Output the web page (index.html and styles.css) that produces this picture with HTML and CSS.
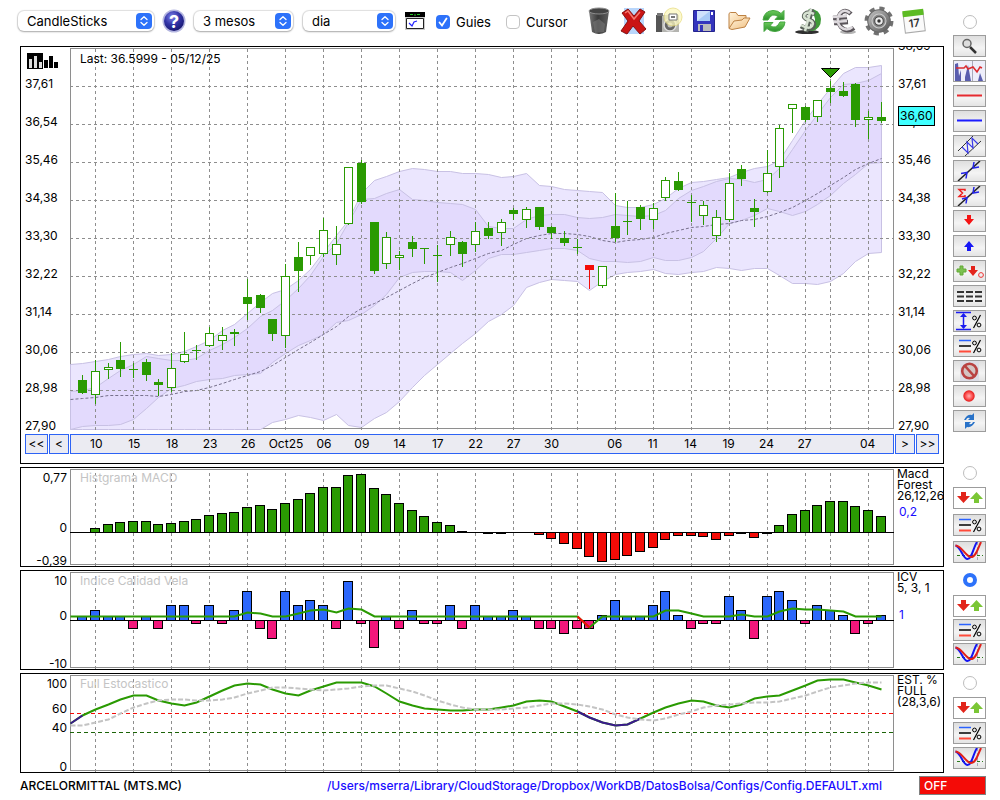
FILE: index.html
```html
<!DOCTYPE html>
<html lang="ca">
<head>
    <meta charset="UTF-8">
    <meta name="viewport" content="width=device-width, initial-scale=1.0">
    <title>ARCELORMITTAL (MTS.MC)</title>
    <link rel="stylesheet" href="styles.css">
</head>
<body>
    <!-- Shared icons -->
    <svg class="defs" aria-hidden="true">
        <defs>
            <radialGradient id="gHelp" cx="40%" cy="30%" r="75%"><stop offset="0" stop-color="#7f83e8"/><stop offset="0.5" stop-color="#3335a8"/><stop offset="1" stop-color="#15156c"/></radialGradient>
            <linearGradient id="gDark" x1="0" x2="1"><stop offset="0" stop-color="#777"/><stop offset="0.45" stop-color="#3a3a3a"/><stop offset="1" stop-color="#606060"/></linearGradient>
            <linearGradient id="gGreen" x1="0" x2="0" y1="0" y2="1"><stop offset="0" stop-color="#6dcc5c"/><stop offset="1" stop-color="#2b8f2b"/></linearGradient>
            <linearGradient id="gMetal" x1="0" x2="1" y1="0" y2="1"><stop offset="0" stop-color="#c4c4c4"/><stop offset="1" stop-color="#555"/></linearGradient>
            <linearGradient id="gFolder" x1="0" x2="1" y1="0" y2="1"><stop offset="0" stop-color="#fff3dc"/><stop offset="1" stop-color="#f0bf80"/></linearGradient>
            <radialGradient id="gDot"><stop offset="0" stop-color="#ffb0b0"/><stop offset="0.5" stop-color="#ff6262"/><stop offset="1" stop-color="#e31818"/></radialGradient>
        </defs>
        <symbol id="updown" viewBox="0 0 16 16">
            <rect width="16" height="16" rx="4" fill="#2d72fa"/>
            <path d="M5 6.500L8 3.700l3 2.800M5 9.500l3 2.800 3-2.800" fill="none" stroke="#fff" stroke-width="1.300" stroke-linecap="round" stroke-linejoin="round"/>
        </symbol>
        <symbol id="arrows" viewBox="0 0 31 20">
            <path d="M7 4h5v4h4l-6.500 7L3 8h4z" fill="#e2251b"/>
            <path d="M20 15h5v-4h4l-6.500-7L16 11h4z" fill="#7ac635"/>
        </symbol>
        <symbol id="levels" viewBox="0 0 31 20">
            <path d="M5 4.500h12" stroke="#2a62ff" stroke-width="1.500"/>
            <path d="M5 10h12" stroke="#000" stroke-width="1.500"/>
            <path d="M5 15.500h12" stroke="#ff4b3a" stroke-width="2"/>
            <path d="M26.500 4l-7 13" stroke="#000" stroke-width="1.200"/>
            <circle cx="20.500" cy="7" r="1.900" fill="none" stroke="#000"/>
            <circle cx="25" cy="14" r="1.900" fill="none" stroke="#000"/>
        </symbol>
        <symbol id="cross" viewBox="0 0 31 20">
            <path d="M3 13.500h26" stroke="#2b7a1d" stroke-dasharray="3 2"/>
            <path d="M23.500 0v20" stroke="#aab" stroke-dasharray="3 2"/>
            <path d="M1.500 3.500C7 5 9 17 13.500 17S19 6 23 0" fill="none" stroke="#1414f2" stroke-width="2"/>
            <path d="M1.500 3.500C8 4 12 15 17 15S24 6 27 0" fill="none" stroke="#e22019" stroke-width="2"/>
        </symbol>
    </svg>

    <div class="layout">
        <main class="main">
            <div class="toolbar">
                <span class="select chart-type">
                    <select aria-label="Tipus de gràfic"><option>CandleSticks</option></select>
                    <svg><use href="#updown"/></svg>
                </span>
                <button class="icon-btn help" aria-label="Ajuda">
                    <svg width="24" height="24" viewBox="0 0 24 24"><circle cx="12" cy="12" r="11.500" fill="#b3b5e0"/><circle cx="12" cy="12" r="10" fill="url(#gHelp)"/><text x="12" y="18.500" font-size="18" font-weight="700" text-anchor="middle" fill="#fff">?</text></svg>
                </button>
                <span class="select period">
                    <select aria-label="Període"><option>3 mesos</option></select>
                    <svg><use href="#updown"/></svg>
                </span>
                <span class="select interval">
                    <select aria-label="Interval"><option>dia</option></select>
                    <svg><use href="#updown"/></svg>
                </span>
                <button class="icon-btn plot-btn" aria-label="Plot">
                    <svg width="20" height="20" viewBox="0 0 20 20"><path d="M0 1h20v18H0z" fill="#ccc"/><path d="M0 1h20v5H0z" fill="#000"/><path d="M5 3.500h3M9 4h2M12 3.500h3" stroke="#27c424"/><path d="M1.500 7.500h17v10h-17z" fill="#fff" stroke="#222"/><path d="M4 12l3 3 2-4 3-1" fill="none" stroke="#22f" stroke-width="1.200"/></svg>
                </button>
                <label class="check guides"><input type="checkbox" checked>Guies</label>
                <label class="check cursor"><input type="checkbox">Cursor</label>

                <div class="actions">
                    <button class="icon-btn" aria-label="Paperera">
                        <svg width="22" height="28" viewBox="0 0 22 28"><path d="M1 4l3 21q7 4 14 0l3-21z" fill="url(#gDark)"/><path d="M5 15l6-3 6 5-1 8-9 1z" fill="#787878" opacity="0.6"/><ellipse cx="11" cy="4" rx="10" ry="3" fill="#444" stroke="#8d8d8d"/></svg>
                    </button>
                    <button class="icon-btn" aria-label="Esborrar">
                        <svg width="28" height="28" viewBox="0 0 28 28"><path d="M4 1h20v26H4z" fill="#b9d6fb"/><path d="M2 6l6-4 6 7 6-7 5 3-6 9 7 8-6 5-7-8-6 8-6-3 7-10z" fill="#ca1414" stroke="#861010"/><path d="M5 6l3-2 6 8 6-7" fill="none" stroke="#f37b72" stroke-width="1.500"/></svg>
                    </button>
                    <button class="icon-btn" aria-label="Captura">
                        <svg width="28" height="28" viewBox="0 0 28 28"><path d="M1 8h23v17H1z" fill="#b4b4b0"/><path d="M1 8h6v17H1z" fill="#555"/><path d="M2 6h6v3H2z" fill="#777"/><circle cx="15" cy="18" r="6" fill="#666" stroke="#ddd" stroke-width="1.500"/><circle cx="15" cy="18" r="2.500" fill="#bbb"/><circle cx="18" cy="10" r="9" fill="#fbf7be" opacity="0.75" stroke="#e8dc79"/><path d="M14 7h8v6h-8z" fill="#fff" stroke="#777"/><path d="M16 9h4v2h-4z" fill="#777"/></svg>
                    </button>
                    <button class="icon-btn" aria-label="Desar">
                        <svg width="22" height="22" viewBox="0 0 22 22"><path d="M.5.500h21v21h-21z" fill="#3434bd" stroke="#24248c"/><path d="M4 1h13v10H4z" fill="#cfe2fb"/><path d="M4 11L17 1v10z" fill="#a9cbf6"/><path d="M5 14h13v7H5z" fill="#bbb"/><path d="M7 15h3v6H7z" fill="#3434bd"/><path d="M18 2h2v3h-2z" fill="#fff"/></svg>
                    </button>
                    <button class="icon-btn" aria-label="Obrir">
                        <svg width="24" height="20" viewBox="0 0 24 20"><path d="M2 17V2.500Q3 1 5 1.500h4l2 3h8V8" fill="url(#gFolder)" stroke="#bd8244"/><path d="M2 17.500L7 10l8-1 2-2h6l-5 9-13 2.500z" fill="url(#gFolder)" stroke="#bd8244" stroke-linejoin="round"/></svg>
                    </button>
                    <button class="icon-btn" aria-label="Actualitzar">
                        <svg width="24" height="26" viewBox="0 0 24 26"><path d="M1 12Q2 3 11 2.500q5 0 8 3l3-3v9h-9l3-3Q10 4 6 12z" fill="url(#gGreen)" stroke="#47a842"/><path d="M23 14q-1 9-10 9.500-5 0-8-3l-3 3v-9h9l-3 3q6 4.500 10-3.500z" fill="url(#gGreen)" stroke="#47a842"/></svg>
                    </button>
                    <button class="icon-btn" aria-label="Dòlar">
                        <svg width="28" height="28" viewBox="0 0 28 28"><ellipse cx="12" cy="25" rx="12" ry="2" fill="#2f2f2f"/><path d="M13 2q12-1 13 10 0 10-9 12l-5-1q9-4 8-11-1-6-7-10z" fill="#3f9a38"/><path d="M6 19q8 5 12 1 3-5-4-7-7-2-4-6 3-3 10 0M17 2L11 25" fill="none" stroke="#59625a" stroke-width="4.500"/><path d="M6 18q8 5 11 1 3-4-3-6-7-2-4-6 3-3 9 0M16 2l-6 22" fill="none" stroke="#d7e2d2" stroke-width="2.600"/></svg>
                    </button>
                    <button class="icon-btn" aria-label="Euro">
                        <svg width="28" height="28" viewBox="0 0 28 28"><ellipse cx="18" cy="25" rx="8" ry="2" fill="#b5b5b5"/><path d="M21 7Q15 1 10 7 6 14 11 20q6 6 13 1M3 11l14-1M4 16l14-1" fill="none" stroke="#595459" stroke-width="4.500"/><path d="M20 6q-6-5-10.500 1-4 7 1 13 6 5 12 0M3 10l14-1M4 15l13-1" fill="none" stroke="#dedade" stroke-width="2.600"/></svg>
                    </button>
                    <button class="icon-btn" aria-label="Configuració">
                        <svg width="30" height="30" viewBox="0 0 28 28"><circle cx="14" cy="14" r="11.500" fill="none" stroke="#717171" stroke-width="4" stroke-dasharray="4.600 4.430"/><circle cx="14" cy="14" r="10.500" fill="url(#gMetal)" stroke="#666"/><circle cx="14" cy="14" r="6.500" fill="#888" stroke="#ccc"/><circle cx="14" cy="14" r="4" fill="#eee" stroke="#444"/><circle cx="14" cy="14" r="1.600" fill="#333"/></svg>
                    </button>
                    <button class="icon-btn" aria-label="Calendari">
                        <svg width="26" height="26" viewBox="0 0 26 26"><g transform="rotate(-7 13 13)"><path d="M3 4h20v20H3z" fill="#fafafa" stroke="#aaa"/><path d="M2.500 2h21v6h-21z" fill="#5cbb23"/><text x="13" y="19" font-size="11" font-weight="600" text-anchor="middle" fill="#333">17</text></g></svg>
                    </button>
                </div>
            </div>

            <div class="panels">
                <!-- Price chart -->
                <section class="panel price">
                    <div class="row">
                        <div class="prices left">
                            <svg class="bars-icon" width="32" height="16" viewBox="0 0 32 16" shape-rendering="crispEdges"><path d="M0 0h16v16H0z"/><path d="M2 6h3v9H2zM7 3h3v12H7zM12 9h3v6h-3z" fill="#ddd"/><path d="M17 7h4v8h-4zM22 3h4v12h-4zM27 9h4v6h-4z"/></svg>
                            <span>37,61</span><span>36,54</span><span>35,46</span><span>34,38</span><span>33,30</span><span>32,22</span><span>31,14</span><span>30,06</span><span>28,98</span><span>27,90</span>
                        </div>
                        <div class="plot">
                            <svg id="pricePlot" viewBox="70 47 824 387" preserveAspectRatio="none"></svg>
                            <div class="last">Last: 36.5999 - 05/12/25</div>
                        </div>
                        <div class="prices right">
                            <span>38,69</span><span>37,61</span><span>36,54</span><span>35,46</span><span>34,38</span><span>33,30</span><span>32,22</span><span>31,14</span><span>30,06</span><span>28,98</span><span>27,90</span>
                            <div class="current">36,60</div>
                        </div>
                    </div>
                    <div class="dates">
                        <button class="wide">&lt;&lt;</button>
                        <button>&lt;</button>
                        <div class="days" id="days"></div>
                        <button>&gt;</button>
                        <button class="wide">&gt;&gt;</button>
                    </div>
                </section>

                <!-- MACD -->
                <section class="panel row">
                    <div class="scale scale-macd"><span>0,77</span><span>0</span><span>-0,39</span></div>
                    <div class="plot">
                        <svg id="macdPlot" viewBox="70 468 824 98" preserveAspectRatio="none"></svg>
                        <div class="title">Histgrama MACD</div>
                    </div>
                    <div class="info"><p>Macd<br>Forest<br>26,12,26</p><b>0,2</b></div>
                </section>

                <!-- ICV -->
                <section class="panel row">
                    <div class="scale scale-icv"><span>10</span><span>0</span><span>-10</span></div>
                    <div class="plot">
                        <svg id="icvPlot" viewBox="70 571 824 98" preserveAspectRatio="none"></svg>
                        <div class="title">Indice Calidad Vela</div>
                    </div>
                    <div class="info"><p>ICV<br>5, 3, 1</p><b>1</b></div>
                </section>

                <!-- Stochastic -->
                <section class="panel row">
                    <div class="scale scale-stoch"><span>100</span><span>60</span><span>40</span><span>0</span></div>
                    <div class="plot">
                        <svg id="stochPlot" viewBox="70 674 824 98" preserveAspectRatio="none"></svg>
                        <div class="title">Full Estocastico</div>
                    </div>
                    <div class="info"><p>EST. %<br>FULL<br>(28,3,6)</p></div>
                </section>
            </div>
        </main>

        <aside class="side">
            <div class="group draw">
                <input type="radio" name="panel" aria-label="Preu">
                <button aria-label="Zoom"><svg viewBox="0 0 31 20"><path d="M16 11l6 6" stroke="#333" stroke-width="2.500"/><circle cx="13" cy="7.500" r="4" fill="#ddd" stroke="#666" stroke-width="1.500"/></svg></button>
                <button aria-label="Volum"><svg viewBox="0 0 31 20"><path d="M0 0h31v20H0z" fill="#eeeefa"/><path d="M1 20V3l3-1 1 13 2-6v11h4v-4l3-12 3 16h7l2-8 3 8z" fill="#5a5eae"/><path d="M18.500 0v20" stroke="#aab"/><path d="M2 7h8l2-2 2 3 5-2 4 5 3-5 2 1" fill="none" stroke="#dc2c30" stroke-width="1.500"/></svg></button>
                <button aria-label="Línia vermella"><svg viewBox="0 0 31 20"><path d="M3 9.500h25" stroke="#e62b30" stroke-width="2"/></svg></button>
                <button aria-label="Línia blava"><svg viewBox="0 0 31 20"><path d="M3 9.500h25" stroke="#1d1dff" stroke-width="2"/></svg></button>
                <button aria-label="Canal"><svg viewBox="0 0 31 20"><path d="M4 15L19 0M11 20L27 5" stroke="#333"/><path d="M8 11l6 6-1-11 6 6-1-10 6 6" fill="none" stroke="#3b3be8" stroke-width="1.200"/></svg></button>
                <button aria-label="Tendència"><svg viewBox="0 0 31 20"><path d="M4 20L26 0" stroke="#222" stroke-width="1.500"/><path d="M7 12.500l6-1-1 6M25 6l-6 1 1-6" fill="none" stroke="#2424e8" stroke-width="1.500"/></svg></button>
                <button aria-label="Suma"><svg viewBox="0 0 31 20"><path d="M4 20L26 0" stroke="#222" stroke-width="1.500"/><path d="M8 13l5-1.500-1 6M25 6l-6 1 1-6" fill="none" stroke="#2424e8" stroke-width="1.500"/><path d="M11 5V3.500H5L8.500 7 5 10.500h6V9" fill="none" stroke="#e22" stroke-width="1.500"/></svg></button>
                <button aria-label="Baixa"><svg viewBox="0 0 31 20"><path d="M13 4h4v4h3l-5 6-5-6h3z" fill="#f51414"/></svg></button>
                <button aria-label="Puja"><svg viewBox="0 0 31 20"><path d="M13 15h4v-4h3l-5-6-5 6h3z" fill="#1818f5"/></svg></button>
                <button aria-label="Senyals"><svg viewBox="0 0 31 20"><path d="M6 5h3v3h3v3H9v3H6v-3H3V8h3z" fill="#7cc150" stroke="#62a936"/><path d="M17 5h4v4h3l-5 6-5-6h3z" fill="#e3231b"/><circle cx="27" cy="14" r="2.400" fill="none" stroke="#e33"/></svg></button>
                <button aria-label="Línies"><svg viewBox="0 0 31 20"><path d="M3 6h25M3 10.500h25M3 15h25" stroke="#333" stroke-width="2" stroke-dasharray="7 2"/></svg></button>
                <button aria-label="Rang"><svg viewBox="0 0 31 20"><path d="M2 1.500h15M2 18.500h15" stroke="#1b1bf0" stroke-width="1.500"/><path d="M9.500 3v14" stroke="#1b1bf0" stroke-width="1.500"/><path d="M6 6l3.500-4L13 6zM6 14l3.500 4 3.500-4z" fill="#1b1bf0"/><path d="M26.500 4l-7 13" stroke="#000" stroke-width="1.200"/><circle cx="20.500" cy="7" r="1.900" fill="none" stroke="#000"/><circle cx="25" cy="14" r="1.900" fill="none" stroke="#000"/></svg></button>
                <button aria-label="Nivells"><svg><use href="#levels"/></svg></button>
                <button aria-label="Prohibit"><svg viewBox="0 0 31 20"><path d="M6 0h19v20H6z" fill="#dcdde6"/><circle cx="15.500" cy="10" r="7.300" fill="#d4c4c4" stroke="#b94242" stroke-width="2.600"/><path d="M11 5l9 10" stroke="#b94242" stroke-width="2.600"/></svg></button>
                <button aria-label="Gravar"><svg viewBox="0 0 31 20"><circle cx="15" cy="10" r="5.700" fill="url(#gDot)"/></svg></button>
                <button aria-label="Recarregar"><svg viewBox="0 0 31 20"><path d="M10 9q3-6 8-5l2-2v7h-6l2-2q-3-1-4 2zM21 11q-3 6-8 5l-2 2v-7h6l-2 2q3 1 4-2z" fill="#2872c8"/></svg></button>
            </div>
            <div class="group g-macd">
                <input type="radio" name="panel" aria-label="MACD">
                <button class="plain" aria-label="Fletxes"><svg><use href="#arrows"/></svg></button>
                <button aria-label="Nivells"><svg><use href="#levels"/></svg></button>
                <button aria-label="Creuaments"><svg><use href="#cross"/></svg></button>
            </div>
            <div class="group g-icv">
                <input type="radio" name="panel" aria-label="ICV" checked>
                <button class="plain" aria-label="Fletxes"><svg><use href="#arrows"/></svg></button>
                <button aria-label="Nivells"><svg><use href="#levels"/></svg></button>
                <button aria-label="Creuaments"><svg><use href="#cross"/></svg></button>
            </div>
            <div class="group g-stoch">
                <input type="radio" name="panel" aria-label="Estocàstic">
                <button class="plain" aria-label="Fletxes"><svg><use href="#arrows"/></svg></button>
                <button aria-label="Nivells"><svg><use href="#levels"/></svg></button>
                <button aria-label="Creuaments"><svg><use href="#cross"/></svg></button>
            </div>
        </aside>
    </div>

    <footer class="footer">
        <span>ARCELORMITTAL (MTS.MC)</span>
        <span class="path">/Users/mserra/Library/CloudStorage/Dropbox/WorkDB/DatosBolsa/Configs/Config.DEFAULT.xml</span>
        <button class="off">OFF</button>
    </footer>

    <script src="charts.js"></script>
</body>
</html>
```
FILE: styles.css
```css
:root {
    --green: #2a9a02;
    --blue: #2d63f5;
    --line: #8e8e8e;
}

* {
    box-sizing: border-box;
}

body {
    margin: 0;
    background: #fff;
    color: #000;
    font-family: Inter, "Liberation Sans", sans-serif;
    font-size: 12px;
    line-height: 14px;
}

button {
    padding: 0;
    border: 0;
    background: none;
    color: inherit;
    font: inherit;
}

svg {
    display: block;
}

.defs {
    position: absolute;
    width: 0;
    height: 0;
}

.layout {
    display: grid;
    grid-template-columns: minmax(0, 1fr) 33px;
    gap: 9px;
    padding: 0 14px 0 20px;
}

/* Toolbar */
.toolbar {
    display: flex;
    align-items: center;
    height: 46px;
    padding-bottom: 4px;
    margin-left: -2px;
    font-size: 13px;
}

.select {
    position: relative;
    margin-right: 10px;
}

.select select {
    appearance: none;
    width: 100%;
    height: 20px;
    padding: 0 24px 1px 9px;
    border: 0;
    border-radius: 6px;
    background: #fff;
    box-shadow: 0 0 1px 1px rgba(0, 0, 0, 0.12), 0 1px 2px rgba(0, 0, 0, 0.25);
    color: #000;
    font: inherit;
}

.select svg {
    position: absolute;
    top: 2px;
    right: 2px;
    width: 16px;
    height: 16px;
    pointer-events: none;
}

.chart-type {
    width: 136px;
    margin-right: 8px;
}

.period {
    width: 99px;
}

.interval {
    width: 92px;
}

.help {
    margin-right: 8px;
}

.plot-btn {
    margin-right: 11px;
}

.check {
    display: flex;
    align-items: center;
    gap: 6px;
    padding-top: 2px;
}

.guides {
    margin-right: 15px;
}

.check input {
    appearance: none;
    width: 14px;
    height: 14px;
    margin: 0;
    border: 1px solid #c4c4c4;
    border-radius: 4px;
}

.check input:checked {
    border: 0;
    background: #2d72fa url("data:image/svg+xml,%3Csvg xmlns='http://www.w3.org/2000/svg' viewBox='0 0 14 14'%3E%3Cpath d='M3.500 7.500l2.500 3 4.500-7' fill='none' stroke='white' stroke-width='1.800' stroke-linecap='round'/%3E%3C/svg%3E");
}

.actions {
    display: grid;
    grid-template-columns: repeat(10, 35px);
    align-items: center;
    justify-items: center;
    margin-left: auto;
    margin-right: 13px;
}

/* Panels */
.panels {
    display: grid;
    gap: 3px;
}

.panel {
    border: 1px solid #000;
    overflow: hidden;
}

.row {
    display: grid;
    grid-template-columns: 49px minmax(0, 1fr) 49px;
}

.plot {
    position: relative;
}

.plot svg {
    width: 100%;
    height: 98px;
}

.price .plot svg {
    height: 387px;
}

.last,
.title {
    position: absolute;
    top: 5px;
    left: 10px;
}

.title {
    top: 3px;
    color: #c4c4c4;
}

.prices {
    position: relative;
    display: flex;
    flex-direction: column;
    gap: 24px;
    height: 387px;
    padding-left: 4px;
}

.prices.right {
    margin-top: -8px;
}

.bars-icon {
    margin: 6px 0 -16px 2px;
    flex: none;
}

.current {
    position: absolute;
    top: 67px;
    left: 4px;
    padding: 2px 1px;
    border: 1px solid #000;
    background: #40ffff;
}

.dates {
    display: flex;
    gap: 1px;
    padding: 0 4px 9px;
}

.dates button,
.days {
    height: 20px;
    border: 1px solid var(--blue);
    background: #ebebf2;
}

.dates button {
    width: 20px;
}

.dates .wide {
    width: 23px;
}

.days {
    flex: 1;
    display: grid;
    grid-template-columns: repeat(65, minmax(0, 1fr));
    align-items: center;
}

.days span {
    grid-row: 1;
    justify-self: center;
    white-space: nowrap;
}

.scale {
    display: grid;
    height: 98px;
    padding: 3px 3px 0 0;
    text-align: right;
}

.scale-macd {
    grid-template-rows: 50px 33px 14px;
}

.scale-icv {
    grid-template-rows: 35px 48px 14px;
}

.scale-stoch {
    grid-template-rows: 25px 19px 39px 14px;
}

.info {
    padding-left: 3px;
    line-height: 11px;
}

.info p {
    min-height: 33px;
    margin: 0 0 5px;
}

.info b {
    padding-left: 2px;
    color: #1a0dff;
    font-weight: 400;
}

/* Side tools */
.side {
    padding-top: 15px;
}

.group {
    display: flex;
    flex-direction: column;
    gap: 3px;
}

.group button {
    height: 22px;
    border: 1px solid #9c9c9c;
    background: linear-gradient(#dedede, #f4f4f4 60%, #e4e4e4);
}

.group .plain {
    background: #fff;
}

.group button svg {
    width: 31px;
    height: 20px;
}

.group input {
    appearance: none;
    width: 14px;
    height: 14px;
    margin: 0 auto 4px;
    border: 1px solid #bdbdbd;
    border-radius: 50%;
}

.group input:checked {
    border: 4px solid #2d72fa;
}

.draw input {
    margin-bottom: 3px;
}

.g-macd {
    gap: 5px;
    margin-top: 34px;
}

.g-macd input {
    margin-bottom: 2px;
}

.g-icv {
    gap: 2px;
    margin-top: 10px;
}

.g-icv input {
    margin-bottom: 6px;
}

.g-stoch {
    margin-top: 11px;
}

.footer {
    display: flex;
    align-items: center;
    padding: 3px 14px 0 20px;
    font-weight: 500;
}

.path {
    margin-left: auto;
    margin-right: 37px;
    color: #1a0dff;
}

.off {
    width: 67px;
    height: 19px;
    padding-left: 4px;
    border: 1px solid #808080;
    background: #f40b07;
    color: #fff;
    text-align: left;
}

/* Chart marks */
.grid {
    fill: none;
    stroke: var(--line);
    stroke-dasharray: 3 3;
    shape-rendering: crispEdges;
}

.frame {
    fill: none;
    stroke: var(--line);
    shape-rendering: crispEdges;
}

.zero {
    stroke: #000;
    shape-rendering: crispEdges;
}

.outer {
    fill: #ebe6fe;
    stroke: #c8c1e4;
}

.inner {
    fill: #e3dafd;
    stroke: #c8c1e4;
}

.mean {
    fill: none;
    stroke: #77708c;
    stroke-dasharray: 3 2;
}

.candle {
    fill: var(--green);
    stroke: var(--green);
    shape-rendering: crispEdges;
}

.candle.hollow rect {
    fill: #fff;
}

.candle.down {
    fill: #f40b07;
    stroke: #f40b07;
}

.marker {
    fill: var(--green);
    stroke: #000;
}

.bar {
    stroke: #000;
    shape-rendering: crispEdges;
}

.macd-up {
    fill: var(--green);
}

.macd-down {
    fill: #f40b07;
}

.icv-up {
    fill: #2c67fb;
}

.icv-down {
    fill: #f3177b;
}

.curve {
    fill: none;
    stroke: var(--green);
    stroke-width: 2;
}

.curve.weak {
    stroke: #f40b07;
}

.curve.low {
    stroke: #3a1a8c;
}

.slow {
    fill: none;
    stroke: #c4c4c4;
    stroke-width: 2;
    stroke-dasharray: 5 2;
}

.limit {
    stroke-dasharray: 4 3;
    shape-rendering: crispEdges;
}

.limit.high {
    stroke: #f40b07;
}

.limit.bottom {
    stroke: #1c6408;
}
```
FILE: charts.js
```js
const LEFT = 70;
const STEP = 824 / 65;

// day index of every guide and its label
const guides = [
    [1, '10'], [4, '15'], [7, '18'], [10, '23'], [13, '26'], [16, 'Oct25'], [19, '06'], [22, '09'],
    [25, '14'], [28, '17'], [31, '22'], [34, '27'], [37, '30'], [39, ''], [42, '06'], [45, '11'],
    [48, '14'], [51, '19'], [54, '24'], [57, '27'], [59, ''], [62, '04']
];

// type, body top, body bottom, wick top, wick bottom
const candles = [
    ['f', 380, 393, 375, 394], ['h', 371, 395, 360, 404], ['h', 367, 370, 363, 379], ['f', 360, 369, 342, 377],
    ['d', 369, 370, 363, 378], ['f', 362, 375, 359, 381], ['f', 382, 385, 379, 396], ['h', 368, 388, 353, 392],
    ['h', 354, 362, 332, 363], ['d', 350, 351, 345, 360], ['h', 333, 346, 327, 347], ['h', 335, 341, 327, 350],
    ['f', 332, 334, 329, 346], ['f', 297, 304, 279, 320], ['f', 295, 308, 294, 313], ['f', 319, 334, 319, 341],
    ['h', 276, 336, 264, 348], ['f', 257, 271, 242, 292], ['h', 247, 256, 247, 265], ['h', 230, 254, 218, 257],
    ['h', 244, 255, 226, 265], ['h', 167, 224, 167, 225], ['f', 163, 202, 160, 204], ['f', 222, 271, 222, 274],
    ['h', 237, 264, 232, 269], ['h', 255, 258, 251, 270], ['f', 242, 249, 236, 257], ['d', 248, 249, 248, 264],
    ['d', 255, 256, 245, 282], ['h', 237, 245, 231, 256], ['f', 242, 254, 241, 267], ['h', 231, 245, 222, 252],
    ['f', 228, 236, 222, 239], ['h', 222, 233, 219, 246], ['f', 210, 214, 208, 220], ['h', 209, 220, 207, 228],
    ['f', 207, 227, 207, 230], ['f', 227, 233, 226, 239], ['f', 238, 243, 231, 246], ['d', 247, 248, 239, 254],
    ['r', 265, 270, 265, 289], ['h', 266, 286, 266, 288], ['f', 226, 238, 193, 242], ['d', 221, 222, 201, 235],
    ['f', 207, 219, 205, 230], ['h', 208, 220, 203, 229], ['h', 180, 198, 177, 201], ['f', 181, 190, 172, 191],
    ['d', 202, 203, 195, 222], ['h', 205, 216, 201, 225], ['h', 217, 236, 210, 242], ['h', 183, 220, 173, 222],
    ['f', 169, 179, 165, 186], ['f', 208, 212, 199, 227], ['h', 173, 192, 150, 193], ['h', 128, 167, 125, 178],
    ['h', 104, 109, 104, 133], ['f', 107, 120, 106, 122], ['h', 100, 117, 100, 122], ['f', 88, 92, 81, 103],
    ['f', 91, 96, 82, 97], ['f', 84, 120, 83, 127], ['h', 117, 120, 111, 139], ['f', 117, 121, 102, 123]
];

// bands start on the left edge, one day before the first candle
const outerTop = [364, 363, 361, 359, 356, 354, 353, 355, 354, 351, 346, 340, 330, 324, 313, 302, 293, 289, 280, 269, 252, 235, 220, 193, 180, 176, 171, 168, 169, 171, 171, 173, 173, 174, 177, 176, 173, 185, 186, 189, 190, 191, 192, 205, 207, 207, 204, 198, 188, 182, 181, 179, 177, 172, 168, 166, 160, 140, 120, 104, 88, 73, 67, 67, 65];
const innerTop = [391, 390, 387, 378, 370, 364, 356, 358, 360, 360, 358, 350, 344, 337, 328, 316, 310, 300, 288, 275, 256, 243, 222, 199, 198, 193, 189, 199, 200, 202, 203, 204, 209, 226, 228, 228, 219, 215, 214, 214, 217, 218, 217, 214, 215, 216, 215, 210, 198, 190, 186, 181, 178, 179, 182, 179, 168, 149, 130, 114, 97, 84, 83, 80, 73];
const innerBottom = [429, 426, 425, 425, 424, 419, 408, 397, 388, 385, 381, 379, 378, 375, 374, 373, 362, 353, 345, 340, 334, 322, 320, 314, 305, 294, 277, 272, 271, 271, 272, 280, 270, 258, 254, 254, 252, 250, 248, 248, 250, 258, 261, 261, 262, 261, 257, 260, 260, 257, 251, 238, 223, 220, 215, 208, 211, 215, 211, 204, 195, 183, 174, 163, 162];
const outerBottom = [429, 429, 429, 429, 429, 429, 429, 429, 429, 429, 429, 429, 429, 429, 429, 429, 422, 419, 415, 417, 420, 414, 425, 427, 418, 412, 401, 387, 375, 364, 353, 343, 333, 321, 314, 305, 287, 282, 279, 280, 281, 290, 281, 274, 272, 271, 269, 273, 274, 272, 271, 267, 268, 270, 268, 268, 275, 283, 283, 284, 281, 273, 261, 253, 252];
const mean = [399, 398, 397, 395, 395, 395, 395, 396, 394, 391, 390, 387, 383, 379, 375, 371, 365, 357, 349, 342, 334, 326, 316, 308, 303, 297, 290, 283, 277, 272, 267, 263, 258, 253, 250, 244, 238, 235, 233, 233, 234, 236, 240, 242, 240, 239, 237, 233, 230, 227, 226, 224, 223, 220, 219, 216, 212, 207, 200, 193, 185, 177, 169, 163, 158];

const macd = [0, 4, 8, 10, 11, 11, 8, 9, 11, 13, 17, 19, 20, 25, 27, 23, 29, 33, 39, 45, 45, 57, 58, 44, 38, 29, 22, 16, 10, 7, 1, 0, -1, -1, 0, 0, -2, -6, -11, -16, -24, -29, -27, -23, -19, -15, -7, -3, -3, -4, -7, -3, -1, -5, -1, 7, 18, 22, 27, 31, 31, 26, 22, 16];
const icv = [4, 10, 4, 4, -8, 4, -8, 15, 15, -3, 15, -3, 10, 29, -8, -18, 29, 15, 20, 15, -8, 39, -3, -27, 4, -8, 10, -3, -3, 15, -8, 15, 4, 4, 10, 4, -8, -8, -13, -8, -8, 5, 20, 4, 4, 15, 29, 5, -8, -3, -3, 24, 10, -18, 24, 29, 20, -3, 15, 10, 5, -13, -3, 5];
const icvLine = [616, 616, 616, 616, 616, 616, 616, 616, 616, 616, 616, 616, 616, 616, 612, 613, 616, 616, 613, 610, 609, 612, 608, 609, 616, 616, 616, 616, 616, 616, 616, 616, 616, 616, 616, 616, 616, 616, 616, 616, 616, 627, 616, 616, 616, 616, 616, 610, 610, 613, 616, 616, 616, 614, 616, 616, 611, 608, 609, 609, 610, 611, 616, 616, 616];
const fast = [723, 715, 709, 704, 699, 695, 695, 700, 703, 705, 702, 696, 690, 685, 683, 684, 689, 693, 695, 690, 686, 682, 682, 682, 686, 693, 701, 705, 708, 709, 710, 710, 709, 709, 707, 705, 701, 700, 701, 706, 711, 717, 722, 725, 724, 718, 712, 707, 703, 700, 701, 705, 707, 704, 698, 696, 695, 690, 685, 680, 679, 679, 682, 685, 689];
const slow = [725, 725, 722, 719, 713, 707, 703, 700, 699, 699, 700, 700, 699, 697, 693, 690, 687, 687, 688, 689, 690, 689, 688, 686, 685, 685, 688, 691, 695, 700, 704, 707, 709, 709, 709, 708, 707, 705, 703, 703, 704, 706, 709, 714, 717, 719, 720, 718, 714, 711, 707, 705, 704, 703, 702, 702, 701, 698, 695, 691, 687, 685, 683, 682, 682];

function dayX(i) {
    return Math.floor(LEFT + (i + 1) * STEP);
}

function points(values, from = 0, to = values.length - 1) {
    return values.slice(from, to + 1).map((y, n) => `${dayX(n + from - 1) + 0.5},${y + 0.5}`);
}

function line(cls, values, from, to) {
    return `<polyline class="${cls}" points="${points(values, from, to).join(' ')}"/>`;
}

function band(cls, top, bottom) {
    return `<polygon class="${cls}" points="${points(top).concat(points(bottom).reverse()).join(' ')}"/>`;
}

function verticals(top, bottom) {
    const d = guides.map(([i]) => `M${dayX(i) + 0.5} ${top}V${bottom}`).join('');
    return `<path class="grid" d="${d}"/>`;
}

function frame(top, bottom) {
    return `<rect class="frame" x="70.5" y="${top + 0.5}" width="823" height="${bottom - top}"/>`;
}

function bars(values, base, name) {
    return values.map((v, i) => {
        if (v === 0) return '';
        const y = v > 0 ? base - v : base;
        const cls = v > 0 ? 'up' : 'down';
        return `<rect class="bar ${name}-${cls}" x="${dayX(i) - 4.5}" y="${y + 0.5}" width="9" height="${Math.abs(v)}"/>`;
    }).join('');
}

function zero(y) {
    return `<path class="zero" d="M70 ${y + 0.5}H894"/>`;
}

function drawCandle([type, top, bottom, high, low], i) {
    const x = dayX(i);
    const cls = { f: '', h: 'hollow', d: '', r: 'down' }[type];
    const body = type === 'd'
        ? `<path d="M${x - 4} ${top + 0.5}h9"/>`
        : `<rect x="${x - 3.5}" y="${top + 0.5}" width="8" height="${bottom - top - 1}"/>`;
    return `<g class="candle ${cls}"><path d="M${x + 0.5} ${high}V${low}"/>${body}</g>`;
}

function drawPrice() {
    let rows = '';
    for (let y = 86; y < 428; y += 38) rows += `M70 ${y + 0.5}H894`;
    document.getElementById('pricePlot').innerHTML =
        frame(48, 428) +
        band('outer', outerTop, outerBottom) +
        band('inner', innerTop, innerBottom) +
        line('mean', mean) +
        `<path class="grid" d="${rows}"/>` +
        verticals(49, 430) +
        candles.map(drawCandle).join('') +
        '<path class="marker" d="M821.5 68.5h18l-9 9z"/>';
}

function drawIndicators() {
    document.getElementById('macdPlot').innerHTML =
        frame(469, 564) + verticals(473, 566) + bars(macd, 532, 'macd') + zero(532);

    document.getElementById('icvPlot').innerHTML =
        frame(572, 667) + verticals(576, 669) + bars(icv, 620, 'icv') + zero(620) +
        line('curve', icvLine) + line('curve weak', icvLine, 40, 41);

    document.getElementById('stochPlot').innerHTML =
        frame(675, 770) + verticals(679, 772) +
        '<path class="limit high" d="M70 713.5H894"/><path class="limit bottom" d="M70 732.5H894"/>' +
        line('curve', fast) + line('curve low', fast, 0, 1) + line('curve low', fast, 40, 45) +
        line('slow', slow);
}

function drawDays() {
    document.getElementById('days').innerHTML = guides
        .filter(([, label]) => label)
        .map(([i, label]) => `<span style="grid-column: ${i + 1} / span 2">${label}</span>`)
        .join('');
}

drawPrice();
drawIndicators();
drawDays();
```
